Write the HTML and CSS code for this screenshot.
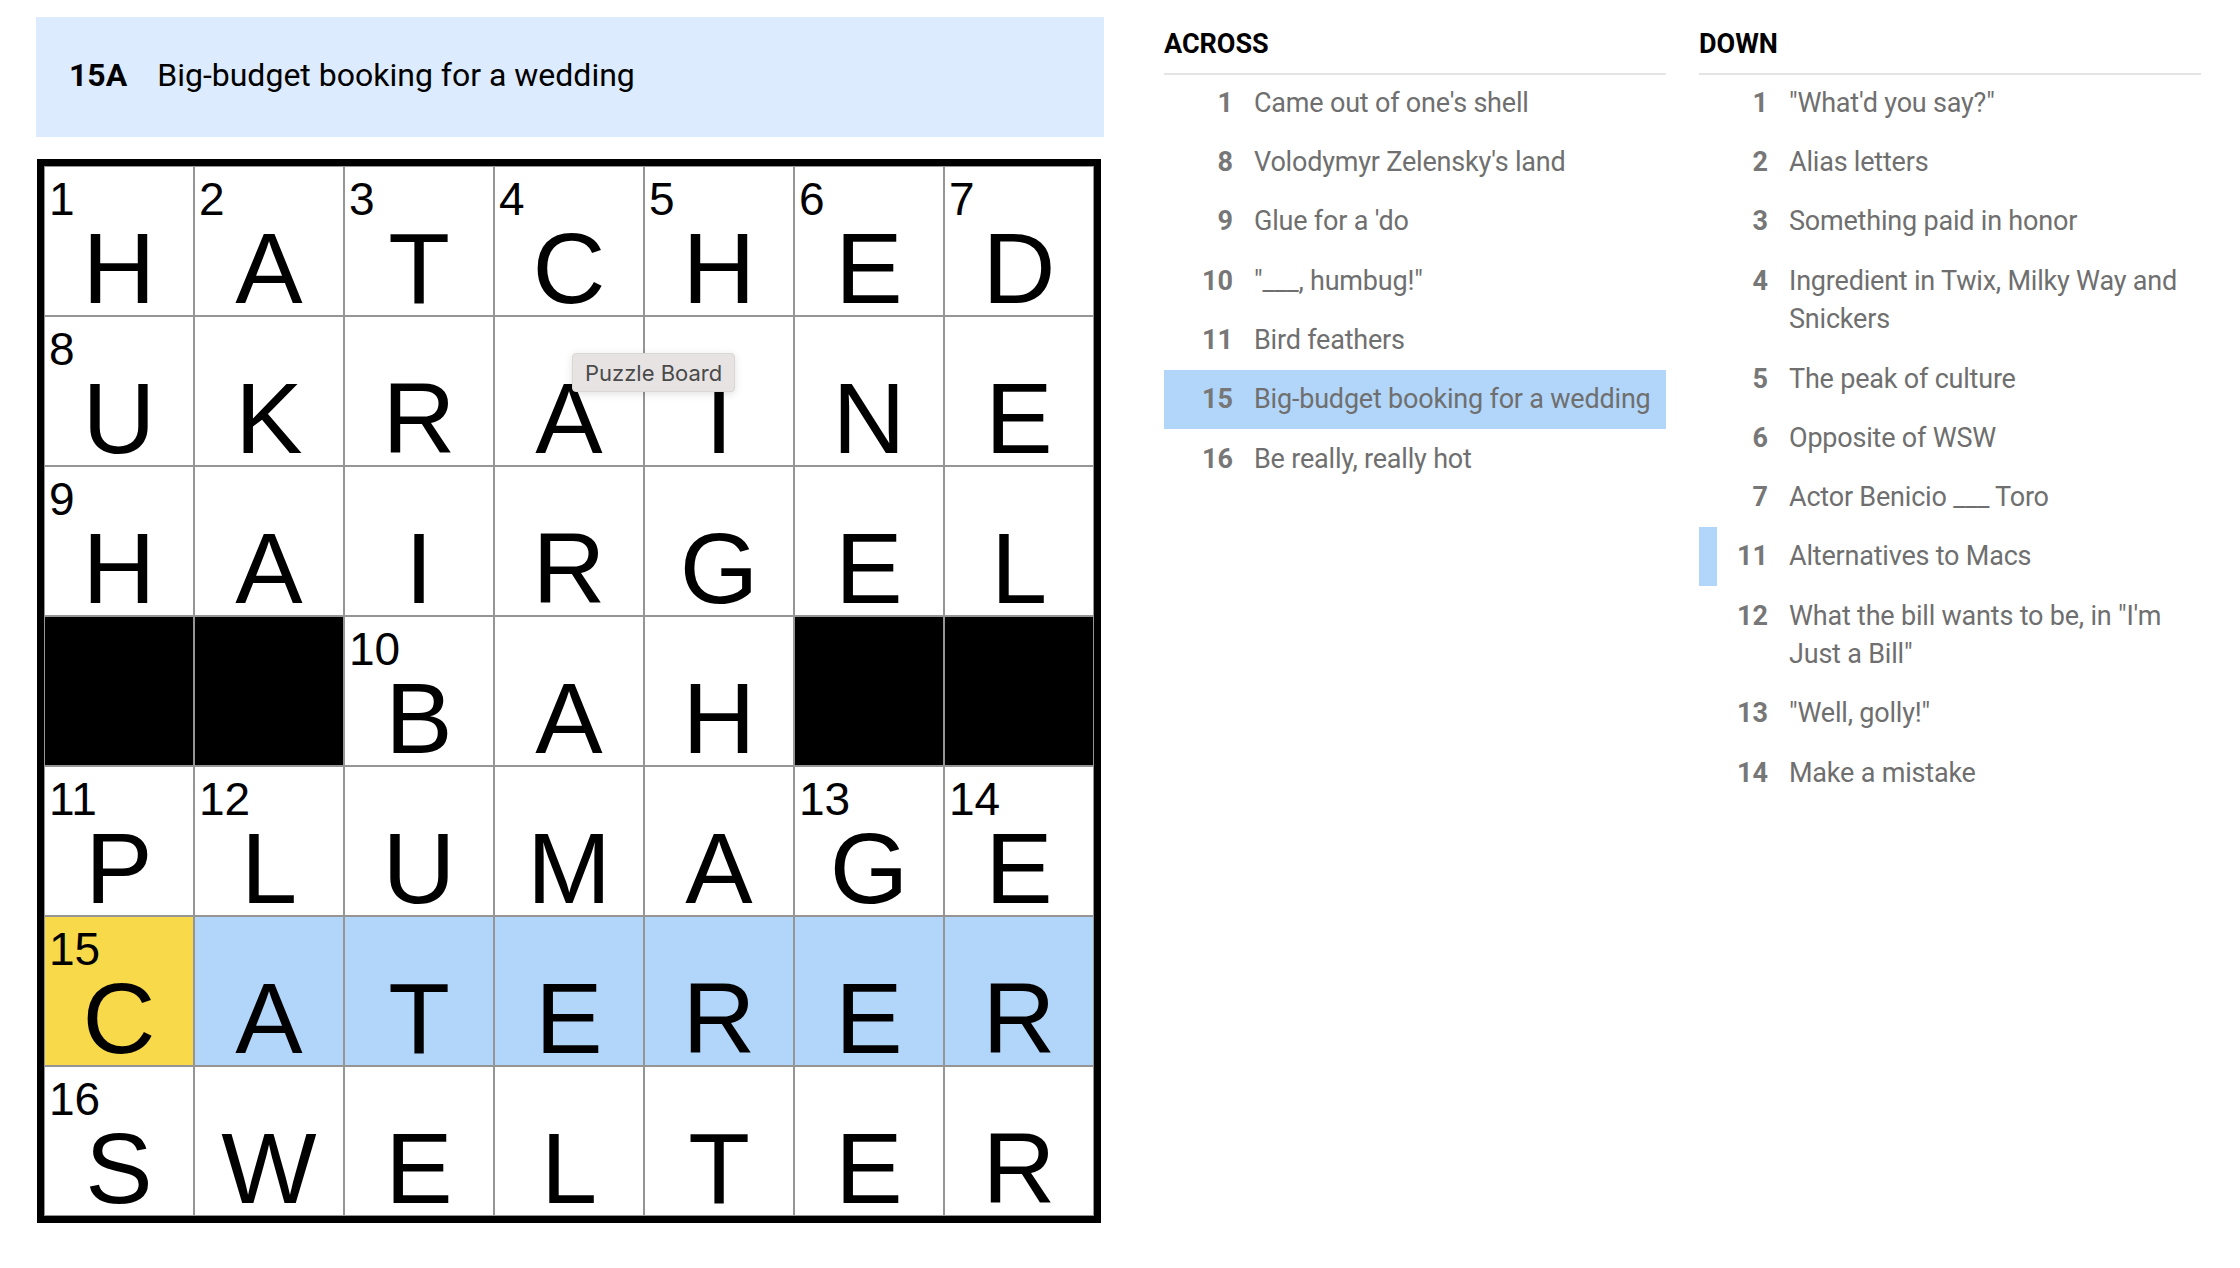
FILE: index.html
```html
<!DOCTYPE html>
<html lang="en">
<head>
<meta charset="utf-8">
<title>Crossword</title>
<link rel="stylesheet" href="styles.css">
</head>
<body>
<div class="app">
  <section class="board-col">
    <div class="clue-bar">
      <span class="clue-bar-num">15A</span>
      <span class="clue-bar-text">Big-budget booking for a wedding</span>
    </div>
    <div class="board-wrap">
      <div class="grid">
        <div class="cell"><span class="num">1</span><span class="letter">H</span></div>
        <div class="cell"><span class="num">2</span><span class="letter">A</span></div>
        <div class="cell"><span class="num">3</span><span class="letter">T</span></div>
        <div class="cell"><span class="num">4</span><span class="letter">C</span></div>
        <div class="cell"><span class="num">5</span><span class="letter">H</span></div>
        <div class="cell"><span class="num">6</span><span class="letter">E</span></div>
        <div class="cell"><span class="num">7</span><span class="letter">D</span></div>

        <div class="cell"><span class="num">8</span><span class="letter">U</span></div>
        <div class="cell"><span class="letter">K</span></div>
        <div class="cell"><span class="letter">R</span></div>
        <div class="cell"><span class="letter">A</span></div>
        <div class="cell"><span class="letter">I</span></div>
        <div class="cell"><span class="letter">N</span></div>
        <div class="cell"><span class="letter">E</span></div>

        <div class="cell"><span class="num">9</span><span class="letter">H</span></div>
        <div class="cell"><span class="letter">A</span></div>
        <div class="cell"><span class="letter">I</span></div>
        <div class="cell"><span class="letter">R</span></div>
        <div class="cell"><span class="letter">G</span></div>
        <div class="cell"><span class="letter">E</span></div>
        <div class="cell"><span class="letter">L</span></div>

        <div class="cell block"></div>
        <div class="cell block"></div>
        <div class="cell"><span class="num">10</span><span class="letter">B</span></div>
        <div class="cell"><span class="letter">A</span></div>
        <div class="cell"><span class="letter">H</span></div>
        <div class="cell block"></div>
        <div class="cell block"></div>

        <div class="cell"><span class="num">11</span><span class="letter">P</span></div>
        <div class="cell"><span class="num">12</span><span class="letter">L</span></div>
        <div class="cell"><span class="letter">U</span></div>
        <div class="cell"><span class="letter">M</span></div>
        <div class="cell"><span class="letter">A</span></div>
        <div class="cell"><span class="num">13</span><span class="letter">G</span></div>
        <div class="cell"><span class="num">14</span><span class="letter">E</span></div>

        <div class="cell selected"><span class="num">15</span><span class="letter">C</span></div>
        <div class="cell word"><span class="letter">A</span></div>
        <div class="cell word"><span class="letter">T</span></div>
        <div class="cell word"><span class="letter">E</span></div>
        <div class="cell word"><span class="letter">R</span></div>
        <div class="cell word"><span class="letter">E</span></div>
        <div class="cell word"><span class="letter">R</span></div>

        <div class="cell"><span class="num">16</span><span class="letter">S</span></div>
        <div class="cell"><span class="letter">W</span></div>
        <div class="cell"><span class="letter">E</span></div>
        <div class="cell"><span class="letter">L</span></div>
        <div class="cell"><span class="letter">T</span></div>
        <div class="cell"><span class="letter">E</span></div>
        <div class="cell"><span class="letter">R</span></div>
      </div>
      <div class="tooltip">Puzzle Board</div>
    </div>
  </section>

  <section class="clues">
    <div class="clue-col">
      <h2 class="clue-head">ACROSS</h2>
      <ol class="clue-list">
        <li class="clue"><span class="clue-num">1</span><span class="clue-text">Came out of one's shell</span></li>
        <li class="clue"><span class="clue-num">8</span><span class="clue-text">Volodymyr Zelensky's land</span></li>
        <li class="clue"><span class="clue-num">9</span><span class="clue-text">Glue for a 'do</span></li>
        <li class="clue"><span class="clue-num">10</span><span class="clue-text">"___, humbug!"</span></li>
        <li class="clue"><span class="clue-num">11</span><span class="clue-text">Bird feathers</span></li>
        <li class="clue clue-active"><span class="clue-num">15</span><span class="clue-text">Big-budget booking for a wedding</span></li>
        <li class="clue"><span class="clue-num">16</span><span class="clue-text">Be really, really hot</span></li>
      </ol>
    </div>
    <div class="clue-col">
      <h2 class="clue-head">DOWN</h2>
      <ol class="clue-list">
        <li class="clue"><span class="clue-num">1</span><span class="clue-text">"What'd you say?"</span></li>
        <li class="clue"><span class="clue-num">2</span><span class="clue-text">Alias letters</span></li>
        <li class="clue"><span class="clue-num">3</span><span class="clue-text">Something paid in honor</span></li>
        <li class="clue"><span class="clue-num">4</span><span class="clue-text">Ingredient in Twix, Milky Way and Snickers</span></li>
        <li class="clue"><span class="clue-num">5</span><span class="clue-text">The peak of culture</span></li>
        <li class="clue"><span class="clue-num">6</span><span class="clue-text">Opposite of WSW</span></li>
        <li class="clue"><span class="clue-num">7</span><span class="clue-text">Actor Benicio ___ Toro</span></li>
        <li class="clue clue-cross"><span class="clue-num">11</span><span class="clue-text">Alternatives to Macs</span></li>
        <li class="clue"><span class="clue-num">12</span><span class="clue-text">What the bill wants to be, in "I'm Just a Bill"</span></li>
        <li class="clue"><span class="clue-num">13</span><span class="clue-text">"Well, golly!"</span></li>
        <li class="clue"><span class="clue-num">14</span><span class="clue-text">Make a mistake</span></li>
      </ol>
    </div>
  </section>
</div>
</body>
</html>
```

FILE: styles.css
```css
* { box-sizing: border-box; }

html, body {
  margin: 0;
  padding: 0;
  background: #ffffff;
}

body {
  font-family: Roboto, "Liberation Sans", Arial, sans-serif;
  color: #000;
}

.app {
  display: flex;
  align-items: flex-start;
  gap: 60px;
  padding: 17px 0 0 36px;
}

/* ---------- left column ---------- */
.board-col {
  width: 1068px;
  flex: none;
  display: flex;
  flex-direction: column;
  gap: 22px;
}

.clue-bar {
  height: 120px;
  background: #dcebfd;
  display: flex;
  align-items: center;
  gap: 30px;
  padding-left: 33px;
  padding-bottom: 5px;
  font-size: 32px;
  line-height: 1;
}

.clue-bar-num {
  font-weight: 700;
}

.clue-bar-text {
  font-weight: 400;
}

.board-wrap {
  position: relative;
  margin-left: 1px;
}

.grid {
  display: grid;
  grid-template-columns: repeat(7, 150px);
  grid-auto-rows: 150px;
  width: max-content;
  border: 7px solid #000;
  background: #fff;
  font-family: "Liberation Sans", Arial, sans-serif;
}

.cell {
  position: relative;
  border: 1px solid #959595;
  background: #fff;
  display: flex;
  justify-content: center;
  align-items: flex-end;
}

.cell.block {
  background: #000;
}

.cell.word {
  background: #b2d6f9;
}

.cell.selected {
  background: #f8d949;
}

.num {
  position: absolute;
  top: 9px;
  left: 4px;
  font-size: 46px;
  line-height: 1;
}

.letter {
  font-size: 101px;
  line-height: 1;
  margin-bottom: -4px;
}

.tooltip {
  position: absolute;
  left: 535px;
  top: 194px;
  height: 39px;
  padding: 0 12px;
  display: flex;
  align-items: center;
  background: #e7e3e3;
  border: 1px solid #dad6d6;
  border-radius: 4px;
  box-shadow: 0 2px 8px rgba(0, 0, 0, 0.12);
  font-family: Inter, "Noto Sans", sans-serif;
  font-size: 22px;
  color: #4a4a4a;
  white-space: nowrap;
}

/* ---------- clue lists ---------- */
.clues {
  display: flex;
  gap: 33px;
  padding-top: 11px;
}

.clue-col {
  width: 502px;
  flex: none;
}

.clue-head {
  margin: 0;
  font-size: 27px;
  line-height: 32px;
  font-weight: 700;
  padding-bottom: 13px;
  border-bottom: 2px solid #e4e4e4;
}

.clue-list {
  list-style: none;
  margin: -1.5px 0 0;
  padding: 0;
}

.clue {
  display: flex;
  align-items: flex-start;
  padding: 10.4px 0;
  font-size: 27px;
  line-height: 38.5px;
  color: #6f6f6f;
}

.clue-num {
  flex: none;
  width: 69px;
  text-align: right;
  font-weight: 700;
  color: #777;
  margin-right: 21px;
}

.clue-text {
  flex: 1;
  letter-spacing: -0.2px;
}

.clue-active {
  background: #b2d6f9;
}

.clue-cross {
  background: linear-gradient(to right, #b2d6f9 18px, transparent 18px);
}
```
